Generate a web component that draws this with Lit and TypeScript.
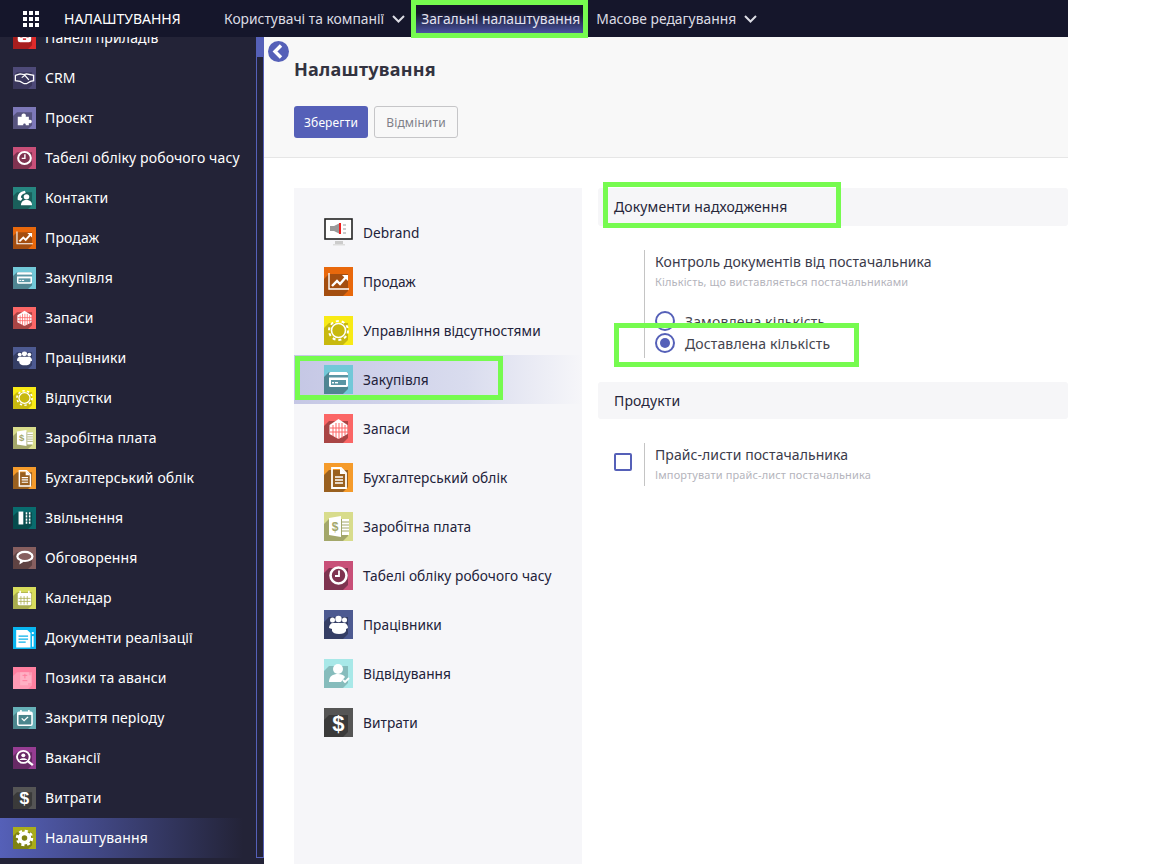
import { LitElement, html, css, svg } from 'lit';
import { customElement } from 'lit/decorators.js';

// glyph drawn on top of each app tile, 29x29 grid
const glyphs: Record<string, any> = {
  dash: svg`<rect x="6" y="5" width="17" height="15" rx="3" fill="#fff"/><circle cx="10.5" cy="12" r="2" fill="#d9272e"/><circle cx="18.5" cy="12" r="2" fill="#d9272e"/><rect x="12.5" y="15" width="4" height="2" fill="#d9272e"/>`,
  crm: svg`<path d="M3 11l6-2 5 1 3-1 9 2v7l-4 1-5 3h-3l-5-3-6-1z" fill="none" stroke="#fff" stroke-width="1.600"/><path d="M11 14l4-3 5 6" fill="none" stroke="#fff" stroke-width="1.600"/>`,
  project: svg`<path d="M6 13h5c-2-6 7-6 5 0h4v4c5-2 5 6 0 4v3h-4c1-3-4-3-3 0H6z" fill="#fff"/>`,
  timesheet: svg`<circle cx="14.500" cy="14.500" r="8" fill="none" stroke="#fff" stroke-width="2.600"/><path d="M15 9.500v5.500h-4" fill="none" stroke="#fff" stroke-width="1.800"/>`,
  contacts: svg`<path d="M6 17c-1-7 3-11 9-12l1 3c-4 1-6 3-6 6l2 1-2 3z" fill="#fff"/><circle cx="17" cy="13" r="3.500" fill="#fff"/><path d="M10 24c0-5 3-7 7-7s7 2 7 7z" fill="#fff"/>`,
  sales: svg`<path d="M5 6v16h20" fill="none" stroke="#fff" stroke-width="1.400"/><path d="M8 19l5-5 3 3 6-7" fill="none" stroke="#fff" stroke-width="2.400"/><path d="M18 8h6v6z" fill="#fff"/>`,
  purchase: svg`<rect x="5" y="7" width="19" height="15" rx="1.500" fill="#fff"/><rect x="5" y="10" width="19" height="2.500" fill="#5b96a4"/><rect x="7" y="15" width="15" height="5" fill="#5b96a4"/><rect x="8" y="17" width="2" height="1.400" fill="#fff"/><rect x="11" y="17" width="3" height="1.400" fill="#fff"/>`,
  stock: svg`<path d="M14.500 5l9 6v9l-9 5-9-5v-9z" fill="#fff"/><path d="M9 11v11M12 9v15M15 9v16M18 9v15M21 11v10M6 14h18M6 18h18" stroke="#f66" stroke-width="1"/>`,
  people: svg`<circle cx="8.500" cy="10" r="2.500" fill="#fff"/><circle cx="20.500" cy="10" r="2.500" fill="#fff"/><circle cx="14.500" cy="9" r="3.200" fill="#fff"/><path d="M5 18c0-3 2-5 4-5h11c2 0 4 2 4 5l-2 1v2c-1 2-3 3-7 3s-6-1-7-3v-2z" fill="#fff"/>`,
  leave: svg`<circle cx="14.500" cy="14.500" r="9.500" fill="none" stroke="#fff" stroke-width="2" stroke-dasharray="3 2.970"/><circle cx="14.500" cy="14.500" r="7" fill="#c8b90e" stroke="#fff" stroke-width="1.600"/>`,
  payroll: svg`<path d="M5 6l12-2v21L5 23z" fill="#fff"/><rect x="18" y="7" width="7" height="16" fill="#fff"/><path d="M18 10h7M18 13h7M18 16h7M18 19h7" stroke="#a3a76a"/><text x="11" y="19" font-size="12" font-weight="700" font-family="Liberation Sans" text-anchor="middle" fill="#a3a76a">$</text>`,
  account: svg`<path d="M8 5h9l5 5v15H8z" fill="none" stroke="#fff" stroke-width="1.800"/><path d="M11 14h8M11 17h8M11 20h8" stroke="#fff" stroke-width="1.400"/><path d="M16 5v6h6z" fill="#fff"/>`,
  exit: svg`<rect x="7" y="6" width="6" height="17" fill="#fff"/><path d="M17 7v15M21 7v15" stroke="#fff" stroke-width="2" stroke-dasharray="3 1"/>`,
  discuss: svg`<ellipse cx="15" cy="12.500" rx="9.500" ry="6" fill="#875f5f" stroke="#fff" stroke-width="2.800"/><path d="M9 17l-1 6 6-4z" fill="#fff"/>`,
  calendar: svg`<rect x="6" y="8" width="17" height="16" rx="1.500" fill="#fff"/><path d="M9 5v5M20 5v5" stroke="#fff" stroke-width="2"/><path d="M10 12v11M14 12v11M18 12v11M7 15h15M7 19h15" stroke="#a9ad4e"/>`,
  delivery: svg`<path d="M4 4h14l4 4v19H4z" fill="#fff"/><path d="M7 12h12M7 16h12M7 20h9" stroke="#09b1ec" stroke-width="1.500"/><rect x="24" y="12" width="2" height="14" fill="#fff"/><circle cx="25" cy="8" r="1.500" fill="#fff"/>`,
  loans: svg`<path d="M9 7h11v4h3v10h-4v3H9z" fill="#ffb0c4"/><path d="M12 11h6M15 9v6M12 18h6" stroke="#ff7a9c" stroke-width="1.200"/>`,
  closing: svg`<rect x="6" y="7" width="18" height="17" rx="1.500" fill="none" stroke="#fff" stroke-width="2"/><rect x="6" y="7" width="18" height="3.500" fill="#fff"/><path d="M10 4v4M20 4v4" stroke="#fff" stroke-width="2"/><path d="M11 15l3 3 5-5" fill="none" stroke="#fff" stroke-width="1.800"/>`,
  jobs: svg`<circle cx="13" cy="13" r="8" fill="none" stroke="#fff" stroke-width="2.400"/><circle cx="13" cy="11" r="2.500" fill="#fff"/><path d="M8 17c1-3 9-3 10 0z" fill="#fff"/><path d="M19 19l6 5" stroke="#fff" stroke-width="3"/>`,
  expense: svg`<text x="14.500" y="23" font-size="22" font-weight="700" font-family="Liberation Sans" text-anchor="middle" fill="#fff">$</text>`,
  gear: svg`<circle cx="14.500" cy="14.500" r="6" fill="none" stroke="#fff" stroke-width="5"/><circle cx="14.500" cy="14.500" r="9.500" fill="none" stroke="#fff" stroke-width="3" stroke-dasharray="4 3.460"/>`,
  debrand: svg`<rect x="1" y="1" width="27" height="20" fill="#fff" stroke="#222" stroke-width="1.600"/><path d="M6 8h4l6-3v11l-6-3H6z" fill="#999"/><rect x="15" y="5" width="2" height="11" fill="#e22"/><path d="M19 7h3M19 11h3M19 15h3" stroke="#999"/><rect x="11" y="23" width="8" height="3" fill="#ccc"/><rect x="9" y="26" width="12" height="1.500" fill="#ddd"/>`,
  attend: svg`<circle cx="14" cy="10" r="5" fill="#fff"/><path d="M5 23c0-6 4-8 9-8 3 0 6 1 7 3l-4 5z" fill="#fff"/><path d="M19 21l2 2 4-4" fill="none" stroke="#fff" stroke-width="1.800"/>`,
};

const colors: Record<string, [string, string]> = {
  dash: ['#e02b2b', '#a81e1e'],
  crm: ['#4e4a78', '#3a375c'],
  project: ['#7d78b8', '#57547f'],
  timesheet: ['#c84f78', '#7f3350'],
  contacts: ['#268680', '#1a5f5b'],
  sales: ['#e8680c', '#a44e10'],
  purchase: ['#72c8d8', '#4f8592'],
  stock: ['#fb6666', '#a94545'],
  people: ['#4d5a91', '#353e65'],
  leave: ['#f8ea16', '#c8b90e'],
  payroll: ['#d8dc8c', '#a3a76a'],
  account: ['#f59b2b', '#996020'],
  exit: ['#096c6e', '#064c4e'],
  discuss: ['#875f5f', '#5f4343'],
  calendar: ['#d7dc5c', '#a9ad4e'],
  delivery: ['#09b5f0', '#09b5f0'],
  loans: ['#ff7f9f', '#ff9ab4'],
  closing: ['#66b0b8', '#4b868d'],
  jobs: ['#963c92', '#672a65'],
  expense: ['#555555', '#3a3a3a'],
  gear: ['#aaad1a', '#7f8212'],
  attend: ['#a8e8e8', '#86bcbc'],
};

// square tile with the long diagonal shadow
const tile = (name: string, cls: string) => {
  if (name === 'debrand') {
    return html`<svg class=${cls} viewBox="0 0 29 29">${glyphs.debrand}</svg>`;
  }
  const [bg, shade] = colors[name];
  return html`<svg class=${cls} viewBox="0 0 29 29" preserveAspectRatio="none">
    <rect width="29" height="29" fill=${bg} />
    <path d="M5 7L24 7 24 24 19 29 0 29 0 12z" fill=${shade} />
    ${glyphs[name]}
  </svg>`;
};

const sideItems: [string, string][] = [
  ['dash', 'Панелі приладів'],
  ['crm', 'CRM'],
  ['project', 'Проєкт'],
  ['timesheet', 'Табелі обліку робочого часу'],
  ['contacts', 'Контакти'],
  ['sales', 'Продаж'],
  ['purchase', 'Закупівля'],
  ['stock', 'Запаси'],
  ['people', 'Працівники'],
  ['leave', 'Відпустки'],
  ['payroll', 'Заробітна плата'],
  ['account', 'Бухгалтерський облік'],
  ['exit', 'Звільнення'],
  ['discuss', 'Обговорення'],
  ['calendar', 'Календар'],
  ['delivery', 'Документи реалізації'],
  ['loans', 'Позики та аванси'],
  ['closing', 'Закриття періоду'],
  ['jobs', 'Вакансії'],
  ['expense', 'Витрати'],
  ['gear', 'Налаштування'],
];

const settingItems: [string, string][] = [
  ['debrand', 'Debrand'],
  ['sales', 'Продаж'],
  ['leave', 'Управління відсутностями'],
  ['purchase', 'Закупівля'],
  ['stock', 'Запаси'],
  ['account', 'Бухгалтерський облік'],
  ['payroll', 'Заробітна плата'],
  ['timesheet', 'Табелі обліку робочого часу'],
  ['people', 'Працівники'],
  ['attend', 'Відвідування'],
  ['expense', 'Витрати'],
];

const chevron = html`<svg class="chev" viewBox="0 0 13 8"><path d="M1 1l5.500 5.500L12 1" fill="none" stroke="currentColor" stroke-width="2" /></svg>`;

@customElement('app-root')
export class AppRoot extends LitElement {
  static styles = css`
    :host {
      display: block;
      width: 1152px;
      height: 864px;
      overflow: hidden;
      position: relative;
      background: #fff;
      font-family: 'Noto Sans', sans-serif;
      font-size: 14px;
      letter-spacing: 0.13px;
      color: #2e2e3a;
    }
    .app {
      width: 1068px;
      height: 864px;
      display: flex;
      flex-direction: column;
      overflow: hidden;
    }
    .topbar {
      flex: none;
      height: 37px;
      background: #15162b;
      color: #dcdce4;
      display: flex;
      align-items: center;
      position: relative;
      z-index: 2;
      letter-spacing: 0;
    }
    .apps {
      width: 16px;
      height: 16px;
      margin-left: 23px;
      display: grid;
      grid-template-columns: repeat(3, 4px);
      grid-auto-rows: 4px;
      gap: 2px;
    }
    .apps i { background: #fff; }
    .brand {
      margin-left: 25px;
      width: 152px;
      color: #fff;
    }
    .menu {
      height: 37px;
      display: flex;
      align-items: center;
      padding: 0 8px;
      gap: 8px;
      font-size: 13.85px;
    }
    .menu.on { background: linear-gradient(#15162b 35%, #5560b8); color: #e4e4f0; }
    .chev { width: 13px; height: 8px; color: #dcdce4; }
    .body { flex: 1; display: flex; min-height: 0; }
    .side {
      flex: none;
      width: 256px;
      height: 827px;
      background: #232337;
      color: #fff;
      overflow: hidden;
    }
    .side ul { list-style: none; margin: -19px 0 0; padding: 0; }
    .side li {
      height: 40px;
      display: flex;
      align-items: center;
      padding-left: 13px;
      gap: 9px;
    }
    .side li span { padding-bottom: 2px; }
    .side li.on { background: linear-gradient(90deg, #5560b8, #232337 95%); }
    .ico-s { width: 23px; height: 22px; flex: none; }
    .rail {
      flex: none;
      width: 8px;
      background: #232337;
    }
    .rail div {
      height: 821px;
      box-sizing: border-box;
      border: 1px solid #5560b8;
      border-top: 0;
    }
    .rail b {
      display: block;
      height: 20px;
      margin: 0 -1px;
      background: #5560b8;
    }
    .main { flex: 1; min-width: 0; position: relative; display: flex; flex-direction: column; background: #fff; }
    .back {
      position: absolute;
      left: 4px;
      top: 4px;
      width: 21px;
      height: 21px;
    }
    .head {
      flex: none;
      height: 121px;
      box-sizing: border-box;
      background: #f8f8f8;
      border-bottom: 1px solid #e6e6e6;
      padding: 20px 0 0 30px;
    }
    h1 {
      margin: 0;
      font-size: 18px;
      font-weight: 700;
      line-height: 25px;
      letter-spacing: 0.25px;
      color: #333340;
    }
    .btns { display: flex; gap: 6px; margin-top: 24px; }
    .btn {
      height: 32px;
      box-sizing: border-box;
      border-radius: 3px;
      font-size: 12px;
      display: flex;
      align-items: center;
      width: 74px;
      justify-content: center;
      background: #5560b8;
      color: #fff;
    }
    .btn.alt {
      background: #f8f8f8;
      border: 1px solid #c6c6c8;
      color: #808088;
      width: 84px;
    }
    .cols { flex: 1; display: flex; padding: 30px 0 0 30px; min-height: 0; }
    .nav {
      flex: none;
      width: 288px;
      background: #f6f6f9;
      padding-top: 20px;
      box-sizing: border-box;
    }
    .nav div {
      height: 49px;
      display: flex;
      align-items: center;
      padding-left: 30px;
      gap: 10px;
      font-size: 13.7px;
      letter-spacing: 0.06px;
      color: #22223a;
    }
    .nav div.on { background: linear-gradient(90deg, #c5c7e5, #d9dcee 60%, #f6f6f9); }
    .ico-l { width: 29px; height: 29px; flex: none; }
    .panel { flex: 1; margin-left: 16px; min-width: 0; }
    .sec {
      height: 38px;
      box-sizing: border-box;
      background: #f6f6f8;
      border-radius: 3px;
      display: flex;
      align-items: center;
      padding-left: 16px;
      color: #26263a;
    }
    .sec:first-child { padding-bottom: 2px; }
    .sec.low { height: 37px; margin-top: 24px; }
    .opt {
      display: flex;
      margin: 24px 0 0 16px;
    }
    .opt .tick { width: 30px; flex: none; padding-top: 10px; }
    .opt .txt { border-left: 1px solid #c4c4c4; padding: 3px 0 4px 10px; }
    .opt .title { line-height: 18px; letter-spacing: 0.07px; color: #3a3a4a; }
    .opt .hint { font-size: 11px; line-height: 15px; margin-top: 3px; color: #b4b4bc; }
    .box {
      width: 18px;
      height: 18px;
      box-sizing: border-box;
      border: 2px solid #5560b8;
      border-radius: 2px;
    }
    .radios { margin-top: 21px; }
    .radio {
      display: flex;
      align-items: center;
      gap: 10px;
      height: 22px;
      color: #44444e;
    }
    .dot {
      width: 20px;
      height: 20px;
      box-sizing: border-box;
      border: 2px solid #5560b8;
      border-radius: 50%;
      background: #fff;
      flex: none;
      display: flex;
      align-items: center;
      justify-content: center;
    }
    .dot.on::after {
      content: '';
      width: 10px;
      height: 10px;
      border-radius: 50%;
      background: #5560b8;
    }
    .mark {
      position: absolute;
      box-sizing: border-box;
      border: 5px solid #76fb4f;
      z-index: 5;
    }
  `;

  render() {
    return html`
      <div class="app">
        <div class="topbar">
          <div class="apps">${Array.from({ length: 9 }, () => html`<i></i>`)}</div>
          <div class="brand">НАЛАШТУВАННЯ</div>
          <div class="menu">Користувачі та компанії ${chevron}</div>
          <div class="menu on">Загальні налаштування</div>
          <div class="menu">Масове редагування ${chevron}</div>
        </div>
        <div class="body">
          <nav class="side">
            <ul>
              ${sideItems.map(([k, t]) => html`<li class=${k === 'gear' ? 'on' : ''}>${tile(k, 'ico-s')}<span>${t}</span></li>`)}
            </ul>
          </nav>
          <div class="rail"><div><b></b></div></div>
          <div class="main">
            <svg class="back" viewBox="0 0 21 21">
              <circle cx="10.500" cy="10.500" r="10.500" fill="#5560b8" />
              <path d="M13 4.500l-6 6 6 6" fill="none" stroke="#fff" stroke-width="3.400" />
            </svg>
            <div class="head">
              <h1>Налаштування</h1>
              <div class="btns">
                <div class="btn">Зберегти</div>
                <div class="btn alt">Відмінити</div>
              </div>
            </div>
            <div class="cols">
              <div class="nav">
                ${settingItems.map(([k, t]) => html`<div class=${k === 'purchase' ? 'on' : ''}>${tile(k, 'ico-l')}<span>${t}</span></div>`)}
              </div>
              <div class="panel">
                <div class="sec">Документи надходження</div>
                <div class="opt">
                  <div class="tick"></div>
                  <div class="txt">
                    <div class="title">Контроль документів від постачальника</div>
                    <div class="hint">Кількість, що виставляється постачальниками</div>
                    <div class="radios">
                      <div class="radio"><span class="dot"></span>Замовлена кількість</div>
                      <div class="radio"><span class="dot on"></span>Доставлена кількість</div>
                    </div>
                  </div>
                </div>
                <div class="sec low">Продукти</div>
                <div class="opt">
                  <div class="tick"><div class="box"></div></div>
                  <div class="txt">
                    <div class="title">Прайс-листи постачальника</div>
                    <div class="hint">Імпортувати прайс-лист постачальника</div>
                  </div>
                </div>
              </div>
            </div>
          </div>
        </div>
      </div>
      <div class="mark" style="left:411px;top:0;width:177px;height:38px"></div>
      <div class="mark" style="left:295px;top:356px;width:208px;height:44px"></div>
      <div class="mark" style="left:603px;top:182px;width:238px;height:46px"></div>
      <div class="mark" style="left:614px;top:323px;width:245px;height:44px"></div>
    `;
  }
}
